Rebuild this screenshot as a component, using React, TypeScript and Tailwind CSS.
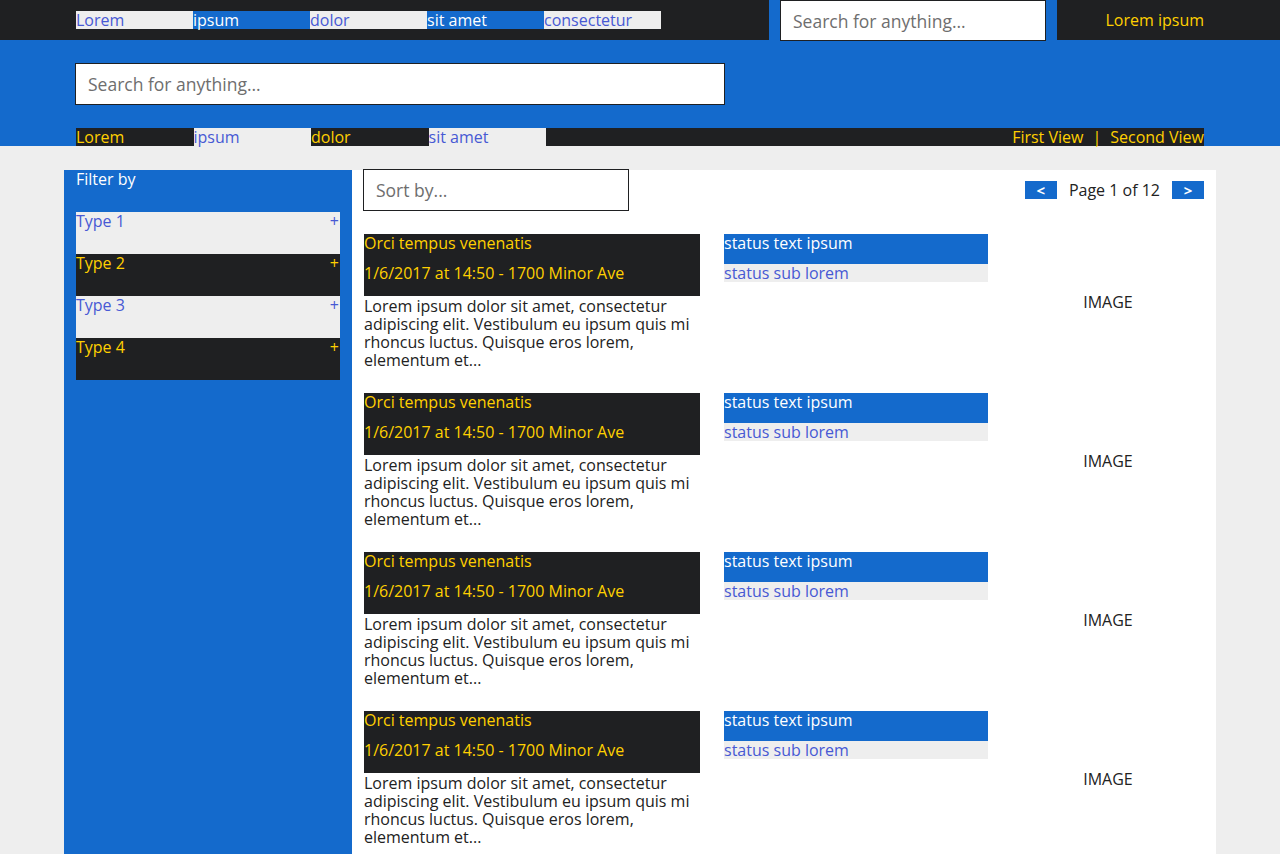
import React from "react";

const topNav = [
  { label: "Lorem", dark: false },
  { label: "ipsum", dark: true },
  { label: "dolor", dark: false },
  { label: "sit amet", dark: true },
  { label: "consectetur", dark: false },
];

const subNav = [
  { label: "Lorem", dark: true },
  { label: "ipsum", dark: false },
  { label: "dolor", dark: true },
  { label: "sit amet", dark: false },
];

const filters = ["Type 1", "Type 2", "Type 3", "Type 4"];

const results = [1, 2, 3, 4].map((id) => ({
  id,
  title: "Orci tempus venenatis",
  when: "1/6/2017 at 14:50 - 1700 Minor Ave",
  body: "Lorem ipsum dolor sit amet, consectetur adipiscing elit. Vestibulum eu ipsum quis mi rhoncus luctus. Quisque eros lorem, elementum et...",
  status: "status text ipsum",
  sub: "status sub lorem",
}));

export default function App() {
  return (
    <div className="min-h-[854px] bg-[#eeeeee] font-['Open_Sans',sans-serif] text-[16px] leading-[18px] text-[#222]">
      {/* Header */}
      <header className="bg-[#146acc]">
        <div className="flex h-10">
          <nav className="flex w-[769px] items-start bg-[#1f2022] pl-[76px] pt-[11px]">
            {topNav.map((item) => (
              <a
                key={item.label}
                href="#"
                className={`h-[18px] w-[117px] ${
                  item.dark ? "bg-[#146acc] text-white" : "bg-[#eeeeee] text-[#4759d4]"
                }`}
              >
                {item.label}
              </a>
            ))}
          </nav>
          <div className="px-[11px]">
            <input
              placeholder="Search for anything..."
              className="h-[41px] w-[266px] border border-[#1f2022] bg-white px-3 text-[17.5px] text-[#222] placeholder:text-[#6e6e6e] outline-none"
            />
          </div>
          <div className="flex flex-1 items-center justify-end bg-[#1f2022] pr-[76px] text-[#ffd000]">
            Lorem ipsum
          </div>
        </div>

        <div className="px-[75px] py-[23px]">
          <input
            placeholder="Search for anything..."
            className="h-[42px] w-[650px] border border-[#1f2022] bg-white px-3 text-[17.5px] text-[#222] placeholder:text-[#6e6e6e] outline-none"
          />
        </div>

        <nav className="mx-[76px] flex h-[18px] bg-[#1f2022]">
          {subNav.map((item) => (
            <a
              key={item.label}
              href="#"
              className={`w-[117.5px] ${
                item.dark ? "bg-[#1f2022] text-[#ffd000]" : "bg-[#eeeeee] text-[#4759d4]"
              }`}
            >
              {item.label}
            </a>
          ))}
          <div className="ml-auto flex gap-[9px] text-[#ffd000]">
            <a href="#">First View</a>
            <span>|</span>
            <a href="#">Second View</a>
          </div>
        </nav>
      </header>

      {/* Body */}
      <div className="flex px-[64px] pt-6">
        <aside className="min-h-[684px] w-[288px] bg-[#146acc] px-3">
          <div className="text-white">Filter by</div>
          <ul className="mt-6">
            {filters.map((f, i) => (
              <li
                key={f}
                className={`flex h-[42px] items-start justify-between ${
                  i % 2 === 1 ? "bg-[#1f2022] text-[#ffd000]" : "bg-[#eeeeee] text-[#4759d4]"
                }`}
              >
                <span>{f}</span>
                <span className="pr-[1px]">+</span>
              </li>
            ))}
          </ul>
        </aside>

        <main className="w-[864px] bg-white px-3">
          <div className="-mt-px flex items-center justify-between">
            <input
              placeholder="Sort by..."
              className="-ml-px h-[42px] w-[266px] border border-[#1f2022] bg-white px-3 text-[17.5px] placeholder:text-[#6e6e6e] outline-none"
            />
            <div className="flex items-center gap-3">
              <button className="h-[18px] w-8 bg-[#146acc] text-[15px] leading-[18px] font-bold text-white">&lt;</button>
              <span className="text-[#222]">Page 1 of 12</span>
              <button className="h-[18px] w-8 bg-[#146acc] text-[15px] leading-[18px] font-bold text-white">&gt;</button>
            </div>
          </div>

          <div className="mt-[23px] flex flex-col gap-6">
            {results.map((r) => (
              <article key={r.id} className="flex gap-6">
                <div className="w-[336px] shrink-0">
                  <div className="h-[62px] bg-[#1f2022] text-[#ffd000]">
                    <div>{r.title}</div>
                    <div className="mt-3">{r.when}</div>
                  </div>
                  <p className="mt-px text-[#222]">{r.body}</p>
                </div>
                <div className="w-[264px] shrink-0">
                  <div className="h-[30px] bg-[#146acc] text-white">{r.status}</div>
                  <div className="h-[18px] bg-[#eeeeee] text-[#4759d4]">{r.sub}</div>
                </div>
                <div className="flex w-[192px] items-center justify-center text-[#222]">IMAGE</div>
              </article>
            ))}
          </div>
        </main>
      </div>
    </div>
  );
}
